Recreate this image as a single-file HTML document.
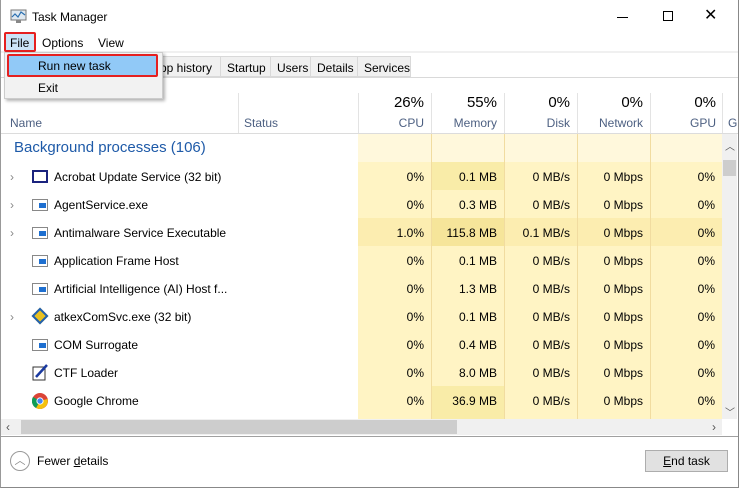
<!DOCTYPE html><html><head><style>
*{margin:0;padding:0;box-sizing:border-box}
body{width:741px;height:489px;background:#fff;font-family:"Liberation Sans",sans-serif;font-size:12px;color:#000;position:relative;overflow:hidden}
.a{position:absolute}
.win{left:0;top:0;width:739px;height:488px;border:1px solid #888;border-top:none;border-left:1px solid #999}
.r{text-align:right}
.hdr{color:#4d6082;font-size:12px}
</style></head><body>
<div class="a win"></div>
<svg class="a" style="left:10px;top:9px" width="17" height="15" viewBox="0 0 17 15"><rect x="1" y="1" width="15" height="10" fill="#dfe8f0" stroke="#777"/><polyline points="2,8 5,5 8,8 11,3 15,6" fill="none" stroke="#2a6fb0" stroke-width="1.2"/><rect x="6" y="11" width="5" height="3" fill="#888"/></svg>
<div class="a" style="left:32px;top:10px;font-size:12px">Task Manager</div>
<div class="a" style="left:617px;top:17px;width:11px;height:1px;background:#000"></div>
<div class="a" style="left:663px;top:11px;width:10px;height:10px;border:1px solid #000"></div>
<div class="a" style="left:704px;top:9px;font-size:16px;line-height:14px">✕</div>
<div class="a" style="left:1px;top:51px;width:737px;height:2px;background:#f0f0f0"></div>
<div class="a" style="left:4px;top:32px;width:32px;height:20px;background:#cce4f7;border:2px solid #e52020;border-radius:2px"></div>
<div class="a" style="left:10px;top:36px">File</div>
<div class="a" style="left:42px;top:36px">Options</div>
<div class="a" style="left:98px;top:36px">View</div>
<div class="a" style="left:150px;top:56px;width:261px;height:21px;background:#f0f0f0;border:1px solid #d9d9d9"></div>
<div class="a" style="left:160px;top:61px">pp history</div>
<div class="a" style="left:220px;top:56px;width:1px;height:21px;background:#d9d9d9"></div>
<div class="a" style="left:227px;top:61px">Startup</div>
<div class="a" style="left:270px;top:56px;width:1px;height:21px;background:#d9d9d9"></div>
<div class="a" style="left:277px;top:61px">Users</div>
<div class="a" style="left:310px;top:56px;width:1px;height:21px;background:#d9d9d9"></div>
<div class="a" style="left:317px;top:61px">Details</div>
<div class="a" style="left:357px;top:56px;width:1px;height:21px;background:#d9d9d9"></div>
<div class="a" style="left:364px;top:61px">Services</div>
<div class="a" style="left:1px;top:77px;width:737px;height:1px;background:#d9d9d9"></div>
<div class="a" style="left:238px;top:93px;width:1px;height:40px;background:#e3e3e3"></div>
<div class="a" style="left:358px;top:93px;width:1px;height:40px;background:#e3e3e3"></div>
<div class="a" style="left:431px;top:93px;width:1px;height:40px;background:#e3e3e3"></div>
<div class="a" style="left:504px;top:93px;width:1px;height:40px;background:#e3e3e3"></div>
<div class="a" style="left:577px;top:93px;width:1px;height:40px;background:#e3e3e3"></div>
<div class="a" style="left:650px;top:93px;width:1px;height:40px;background:#e3e3e3"></div>
<div class="a" style="left:722px;top:93px;width:1px;height:40px;background:#e3e3e3"></div>
<div class="a hdr" style="left:10px;top:116px">Name</div>
<div class="a hdr" style="left:244px;top:116px">Status</div>
<div class="a r" style="left:358px;top:94px;width:66px;font-size:15px">26%</div>
<div class="a r" style="left:431px;top:94px;width:66px;font-size:15px">55%</div>
<div class="a r" style="left:504px;top:94px;width:66px;font-size:15px">0%</div>
<div class="a r" style="left:577px;top:94px;width:66px;font-size:15px">0%</div>
<div class="a r" style="left:650px;top:94px;width:66px;font-size:15px">0%</div>
<div class="a r hdr" style="left:358px;top:116px;width:66px">CPU</div>
<div class="a r hdr" style="left:431px;top:116px;width:66px">Memory</div>
<div class="a r hdr" style="left:504px;top:116px;width:66px">Disk</div>
<div class="a r hdr" style="left:577px;top:116px;width:66px">Network</div>
<div class="a r hdr" style="left:650px;top:116px;width:66px">GPU</div>
<div class="a hdr" style="left:728px;top:116px">G</div>
<div class="a" style="left:1px;top:133px;width:737px;height:1px;background:#dcdcdc"></div>
<div class="a" style="left:358px;top:134px;width:364px;height:28px;background:#fff8dc"></div>
<div class="a" style="left:358px;top:162px;width:364px;height:257px;background:#fff4c4"></div>
<div class="a" style="left:431px;top:162px;width:73px;height:28px;background:#f9eca8"></div>
<div class="a" style="left:358px;top:218px;width:364px;height:28px;background:#fcedb0"></div>
<div class="a" style="left:431px;top:218px;width:73px;height:28px;background:#f6e59a"></div>
<div class="a" style="left:431px;top:386px;width:73px;height:33px;background:#f9eca8"></div>
<div class="a" style="left:431px;top:134px;width:1px;height:285px;background:#f1dca0"></div>
<div class="a" style="left:504px;top:134px;width:1px;height:285px;background:#f1dca0"></div>
<div class="a" style="left:577px;top:134px;width:1px;height:285px;background:#f1dca0"></div>
<div class="a" style="left:650px;top:134px;width:1px;height:285px;background:#f1dca0"></div>
<div class="a" style="left:14px;top:139px;font-size:15px;color:#1e5aa8">Background processes (106)</div>
<div class="a" style="left:722px;top:134px;width:15px;height:285px;background:#f0f0f0"></div>
<div class="a" style="left:725px;top:138px;font-size:10px;color:#555">︿</div>
<div class="a" style="left:723px;top:160px;width:13px;height:16px;background:#cdcdcd"></div>
<div class="a" style="left:725px;top:404px;font-size:10px;color:#555">﹀</div>
<div class="a" style="left:10px;top:170px;color:#888">›</div>
<div class="a" style="left:10px;top:198px;color:#888">›</div>
<div class="a" style="left:10px;top:226px;color:#888">›</div>
<div class="a" style="left:10px;top:310px;color:#888">›</div>
<div class="a" style="left:32px;top:170px;width:16px;height:13px;border:2px solid #1a237e"></div>
<div class="a" style="left:32px;top:199px;width:16px;height:12px;border:1px solid #888;background:#fff"><div class="a" style="left:6px;top:3px;width:7px;height:5px;background:#1e6fd0"></div></div>
<div class="a" style="left:32px;top:227px;width:16px;height:12px;border:1px solid #888;background:#fff"><div class="a" style="left:6px;top:3px;width:7px;height:5px;background:#1e6fd0"></div></div>
<div class="a" style="left:32px;top:255px;width:16px;height:12px;border:1px solid #888;background:#fff"><div class="a" style="left:6px;top:3px;width:7px;height:5px;background:#1e6fd0"></div></div>
<div class="a" style="left:32px;top:283px;width:16px;height:12px;border:1px solid #888;background:#fff"><div class="a" style="left:6px;top:3px;width:7px;height:5px;background:#1e6fd0"></div></div>
<div class="a" style="left:34px;top:310px;width:12px;height:12px;background:#e8c020;transform:rotate(45deg);border:2px solid #2060b0"></div>
<div class="a" style="left:32px;top:339px;width:16px;height:12px;border:1px solid #888;background:#fff"><div class="a" style="left:6px;top:3px;width:7px;height:5px;background:#1e6fd0"></div></div>
<svg class="a" style="left:32px;top:364px" width="16" height="17"><rect x="1" y="3" width="12" height="13" fill="#fff" stroke="#333"/><line x1="4" y1="13" x2="15" y2="1" stroke="#1a3aa0" stroke-width="2.5"/></svg>
<svg class="a" style="left:32px;top:393px" width="16" height="16" viewBox="0 0 16 16"><circle cx="8" cy="8" r="8" fill="#db4437"/><path d="M8 8 L15.5 6 A8 8 0 0 1 4 15 Z" fill="#f4c20d"/><path d="M8 8 L4 15 A8 8 0 0 1 1 4 Z" fill="#0f9d58"/><circle cx="8" cy="8" r="3.6" fill="#fff"/><circle cx="8" cy="8" r="2.7" fill="#4285f4"/></svg>
<div class="a" style="left:54px;top:170px">Acrobat Update Service (32 bit)</div>
<div class="a" style="left:54px;top:198px">AgentService.exe</div>
<div class="a" style="left:54px;top:226px">Antimalware Service Executable</div>
<div class="a" style="left:54px;top:254px">Application Frame Host</div>
<div class="a" style="left:54px;top:282px">Artificial Intelligence (AI) Host f...</div>
<div class="a" style="left:54px;top:310px">atkexComSvc.exe (32 bit)</div>
<div class="a" style="left:54px;top:338px">COM Surrogate</div>
<div class="a" style="left:54px;top:366px">CTF Loader</div>
<div class="a" style="left:54px;top:394px">Google Chrome</div>
<div class="a" style="left:358px;top:163px;width:364px">
<table style="border-collapse:collapse;font-size:12px;font-family:'Liberation Sans',sans-serif">
<tbody>
<tr style="height:28px"><td style="width:73px;text-align:right;padding-right:7px">0%</td><td style="width:73px;text-align:right;padding-right:7px">0.1 MB</td><td style="width:73px;text-align:right;padding-right:7px">0 MB/s</td><td style="width:73px;text-align:right;padding-right:7px">0 Mbps</td><td style="width:72px;text-align:right;padding-right:7px">0%</td></tr>
<tr style="height:28px"><td style="text-align:right;padding-right:7px">0%</td><td style="text-align:right;padding-right:7px">0.3 MB</td><td style="text-align:right;padding-right:7px">0 MB/s</td><td style="text-align:right;padding-right:7px">0 Mbps</td><td style="text-align:right;padding-right:7px">0%</td></tr>
<tr style="height:28px"><td style="text-align:right;padding-right:7px">1.0%</td><td style="text-align:right;padding-right:7px">115.8 MB</td><td style="text-align:right;padding-right:7px">0.1 MB/s</td><td style="text-align:right;padding-right:7px">0 Mbps</td><td style="text-align:right;padding-right:7px">0%</td></tr>
<tr style="height:28px"><td style="text-align:right;padding-right:7px">0%</td><td style="text-align:right;padding-right:7px">0.1 MB</td><td style="text-align:right;padding-right:7px">0 MB/s</td><td style="text-align:right;padding-right:7px">0 Mbps</td><td style="text-align:right;padding-right:7px">0%</td></tr>
<tr style="height:28px"><td style="text-align:right;padding-right:7px">0%</td><td style="text-align:right;padding-right:7px">1.3 MB</td><td style="text-align:right;padding-right:7px">0 MB/s</td><td style="text-align:right;padding-right:7px">0 Mbps</td><td style="text-align:right;padding-right:7px">0%</td></tr>
<tr style="height:28px"><td style="text-align:right;padding-right:7px">0%</td><td style="text-align:right;padding-right:7px">0.1 MB</td><td style="text-align:right;padding-right:7px">0 MB/s</td><td style="text-align:right;padding-right:7px">0 Mbps</td><td style="text-align:right;padding-right:7px">0%</td></tr>
<tr style="height:28px"><td style="text-align:right;padding-right:7px">0%</td><td style="text-align:right;padding-right:7px">0.4 MB</td><td style="text-align:right;padding-right:7px">0 MB/s</td><td style="text-align:right;padding-right:7px">0 Mbps</td><td style="text-align:right;padding-right:7px">0%</td></tr>
<tr style="height:28px"><td style="text-align:right;padding-right:7px">0%</td><td style="text-align:right;padding-right:7px">8.0 MB</td><td style="text-align:right;padding-right:7px">0 MB/s</td><td style="text-align:right;padding-right:7px">0 Mbps</td><td style="text-align:right;padding-right:7px">0%</td></tr>
<tr style="height:28px"><td style="text-align:right;padding-right:7px">0%</td><td style="text-align:right;padding-right:7px">36.9 MB</td><td style="text-align:right;padding-right:7px">0 MB/s</td><td style="text-align:right;padding-right:7px">0 Mbps</td><td style="text-align:right;padding-right:7px">0%</td></tr>
</tbody></table></div>
<div class="a" style="left:1px;top:419px;width:721px;height:16px;background:#f0f0f0"></div>
<div class="a" style="left:21px;top:420px;width:436px;height:14px;background:#cdcdcd"></div>
<div class="a" style="left:6px;top:420px;color:#555">‹</div>
<div class="a" style="left:712px;top:420px;color:#555">›</div>
<div class="a" style="left:1px;top:436px;width:737px;height:1px;background:#a0a0a0"></div>
<div class="a" style="left:10px;top:451px;width:20px;height:20px;border:1px solid #999;border-radius:50%;font-size:11px;text-align:center;line-height:18px;color:#888">︿</div>
<div class="a" style="left:37px;top:454px">Fewer <u>d</u>etails</div>
<div class="a" style="left:645px;top:450px;width:83px;height:22px;background:#e1e1e1;border:1px solid #adadad;text-align:center;line-height:20px"><u>E</u>nd task</div>
<div class="a" style="left:4px;top:52px;width:159px;height:47px;background:#f2f2f2;border:1px solid #ccc;box-shadow:2px 2px 3px rgba(0,0,0,.3)"></div>
<div class="a" style="left:7px;top:54px;width:151px;height:23px;background:#91c9f7;border:2px solid #e52020;border-radius:2px"></div>
<div class="a" style="left:38px;top:59px">Run new task</div>
<div class="a" style="left:38px;top:81px">Exit</div>
</body></html>
